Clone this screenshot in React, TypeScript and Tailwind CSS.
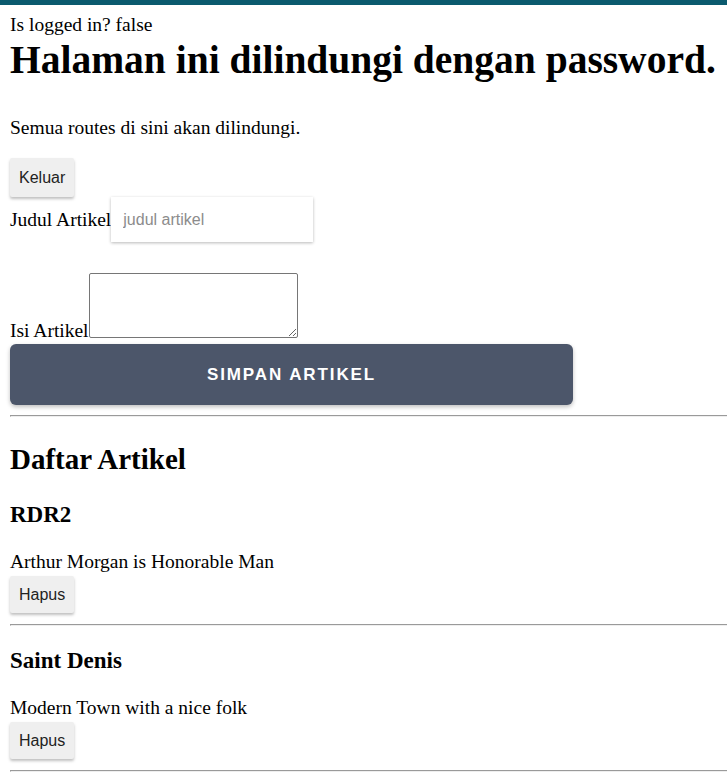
import { useState } from 'react';

interface Article {
  id: number;
  title: string;
  body: string;
}

const initialArticles: Article[] = [
  { id: 1, title: 'RDR2', body: 'Arthur Morgan is Honorable Man' },
  { id: 2, title: 'Saint Denis', body: 'Modern Town with a nice folk' },
];

const serif = "font-['Liberation_Serif','Times_New_Roman',serif]";
const sans = "font-['Liberation_Sans',Arial,sans-serif]";

function Divider() {
  return <hr className="h-0 border-t border-t-[#9a9a9a] border-b border-b-[#eeeeee] border-l border-l-[#9a9a9a]" />;
}

function GrayButton({ label, tall, onClick }: { label: string; tall?: boolean; onClick?: () => void }) {
  return (
    <button
      onClick={onClick}
      className={`${sans} ${tall ? 'h-[39px]' : 'h-[37px]'} px-[9px] bg-[#efefef] text-[16px] text-[#222222] shadow-[0_2px_3px_rgba(0,0,0,0.25)] rounded-[2px]`}
    >
      {label}
    </button>
  );
}

export default function App() {
  const [articles, setArticles] = useState<Article[]>(initialArticles);
  const [title, setTitle] = useState('');
  const [body, setBody] = useState('');

  const save = () => {
    if (!title) return;
    setArticles([...articles, { id: Date.now(), title, body }]);
    setTitle('');
    setBody('');
  };

  return (
    <div className={`${serif} text-black bg-white min-h-[774px] overflow-hidden`}>
      <div className="h-[5px] bg-[#0b5a6e]" />
      <div className="pl-[10px]">
        <div className="mt-[9px] text-[19.5px] leading-[22px]">Is logged in? false</div>
        <h1 className="mt-[2px] text-[39.5px] leading-[45px] font-bold whitespace-nowrap">
          Halaman ini dilindungi dengan password.
        </h1>
        <p className="mt-[34px] text-[19.5px] leading-[22px]">Semua routes di sini akan dilindungi.</p>
        <div className="mt-[19px]">
          <GrayButton label="Keluar" tall />
        </div>

        <div className="flex items-center">
          <label className="text-[19.5px] leading-[22px]">Judul Artikel</label>
          <input
            value={title}
            onChange={(e) => setTitle(e.target.value)}
            placeholder="judul artikel"
            className={`${sans} w-[202px] h-[45px] px-[12px] bg-white text-[16px] placeholder:text-[#8c8c8c] shadow-[0_1px_3px_rgba(0,0,0,0.28)] outline-none`}
          />
        </div>

        <div className="mt-[31px] flex items-end">
          <label className="text-[19.5px] leading-[22px]">Isi Artikel</label>
          <textarea
            value={body}
            onChange={(e) => setBody(e.target.value)}
            className="w-[209px] h-[65px] mb-[4px] border border-[#767676] rounded-[2px] bg-white"
          />
        </div>

        <button
          onClick={save}
          className={`${sans} mt-[2px] w-[563px] h-[61px] rounded-[6px] bg-[#4c566a] text-white text-[17px] font-bold tracking-[1.9px] shadow-[0_2px_4px_rgba(0,0,0,0.25)]`}
        >
          SIMPAN ARTIKEL
        </button>

        <div className="mt-[10px]">
          <Divider />
        </div>

        <h2 className="mt-[26px] text-[29px] leading-[33px] font-bold">Daftar Artikel</h2>

        {articles.map((a, i) => (
          <div key={a.id}>
            <h3 className={`${i === 0 ? 'mt-[26px]' : 'mt-[22px]'} text-[23px] leading-[26px] font-bold`}>{a.title}</h3>
            <div className="mt-[23px] text-[19.5px] leading-[22px]">{a.body}</div>
            <div className="mt-[3px]">
              <GrayButton label="Hapus" onClick={() => setArticles(articles.filter((x) => x.id !== a.id))} />
            </div>
            <div className="mt-[11px]">
              <Divider />
            </div>
          </div>
        ))}
      </div>
    </div>
  );
}
